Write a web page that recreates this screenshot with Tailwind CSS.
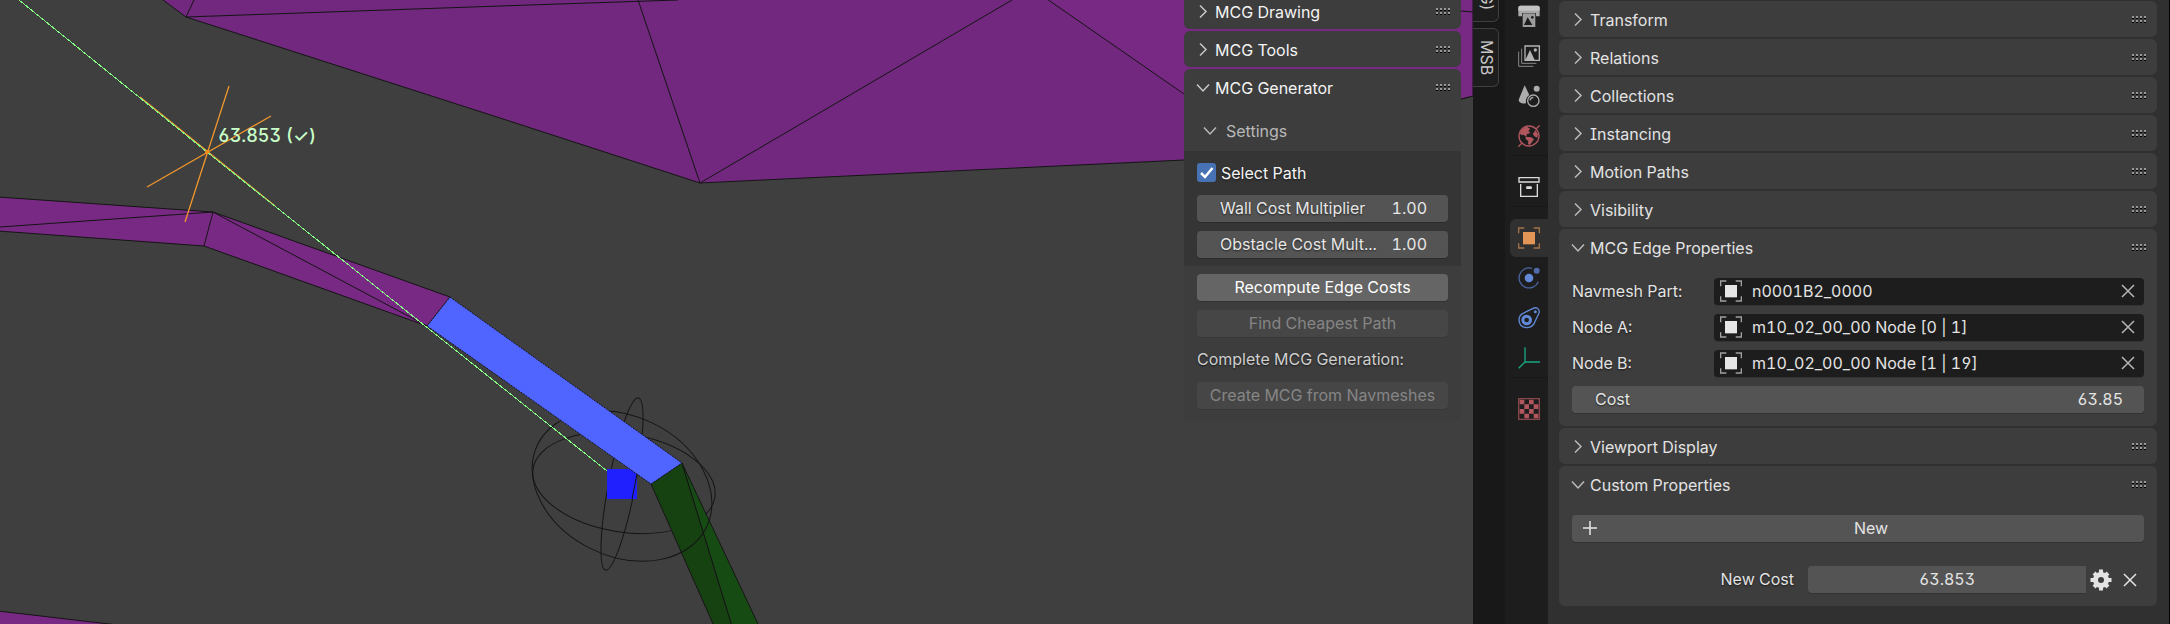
<!DOCTYPE html>
<html lang="en">
<head>
<meta charset="utf-8">
<meta name="viewport" content="width=device-width, initial-scale=1">
<title>MCG Editor</title>
<script src="https://cdn.jsdelivr.net/npm/@tailwindcss/browser@4"></script>
</head>
<body class="bg-[#3f3f3f] font-['Inter',sans-serif] text-base leading-5 text-[#e3e3e3] [font-feature-settings:'cv08','cv09','cv03','cv04','tnum'] [font-optical-sizing:none] [text-shadow:0_1px_2px_rgb(0_0_0/0.6)]">

<svg class="hidden" aria-hidden="true">
  <symbol id="right" viewBox="0 0 14 14"><path d="M4 1.500L10 7.500L4 13.500" fill="none" stroke="currentColor" stroke-width="1.500"/></symbol>
  <symbol id="down" viewBox="0 0 14 14"><path d="M1 4.500L7 11L13 4.500" fill="none" stroke="currentColor" stroke-width="1.500"/></symbol>
  <symbol id="grip" viewBox="0 0 14 7">
    <path d="M0 2h2v1h-2zM4 2h2v1h-2zM8 2h2v1h-2zM12 2h2v1h-2zM0 6h2v1h-2zM4 6h2v1h-2zM8 6h2v1h-2zM12 6h2v1h-2z" fill="#000"/>
    <path d="M0 0h2v2h-2zM4 0h2v2h-2zM8 0h2v2h-2zM12 0h2v2h-2zM0 4h2v2h-2zM4 4h2v2h-2zM8 4h2v2h-2zM12 4h2v2h-2z" fill="#989898"/>
  </symbol>
  <symbol id="cross" viewBox="0 0 14 14"><path d="M1 1L13 13M13 1L1 13" fill="none" stroke="currentColor" stroke-width="1.500"/></symbol>
  <symbol id="object" viewBox="0 0 66 66">
    <path d="M2 19V3H19M47 3H64V19M2 49V63H19M47 63H64V49" fill="none" stroke="currentColor" stroke-width="4" opacity=".65"/>
    <path d="M15 15H51V52H15z" fill="currentColor"/>
  </symbol>
</svg>

<div class="flex min-h-screen overflow-hidden">

  <main class="relative flex min-w-0 flex-1 overflow-hidden">
    <svg class="absolute top-0 left-0" width="1473" height="624" viewBox="0 0 1473 624" role="img" aria-label="Navmesh viewport">
      <g stroke="#151515" stroke-width="1">
        <path d="M163 0L186 17L500 118L700 183L1184 160L1280 156L1461 99L1473 96V-2H163z" fill="#71287e"/>
        <path d="M1047 -1L1184 94L1280 156L1461 99L1473 96V-2z" fill="#782983"/>
        <path d="M194 0L186 17L500 6L678 0M638 0L700 183L1012 0M1461 11L1473 12" fill="none"/>
        <path d="M-2 197L213 212L450 297L427 326L204 246L-2 231z" fill="#782983"/>
        <path d="M0 227L213 212L204 246M213 212L427 326" fill="none"/>
        <path d="M-2 611L118 625H-2z" fill="#782983"/>
        <ellipse cx="624" cy="483" rx="92" ry="49" transform="rotate(9 624 483)" fill="none"/>
        <path d="M651 484L714 626H732L682 463z" fill="#164212"/>
        <path d="M682 463L759 626H732z" fill="#174b14"/>
        <ellipse cx="622" cy="486" rx="94" ry="70" transform="rotate(26 622 486)" fill="none"/>
        <ellipse cx="622" cy="484" rx="87.500" ry="13.400" transform="rotate(-79.200 622 484)" fill="none"/>
        <path d="M607 469H637V499H607z" fill="#2020ff" stroke="none"/>
        <path d="M637 474L632 499" fill="none"/>
        <path d="M450 297L682 463L651 484L427 326z" fill="#5065ff" stroke-dasharray="2 1"/>
      </g>
      <path d="M229 86L185 222M271 116L147 187M140 97L275 206" fill="none" stroke="#f0962e" stroke-width="1.300"/>
      <path d="M19 0L207 152L607 471" fill="none" stroke="#84ff84" stroke-width="1" shape-rendering="crispEdges"/>
      <circle cx="207" cy="152" r="2" fill="#ff8c1a"/>
      <text x="218" y="142" font-size="18" font-weight="500" fill="#c8ffc8" class="[text-shadow:none]">63.853 (✓)</text>
    </svg>

    <aside class="relative -mt-[7px] mr-3 ml-auto flex w-[277px] flex-col gap-0.5 text-[#f4f4f4]">
      <section class="rounded-md bg-[#3d3d3d]">
        <button class="flex h-9 w-full items-center pr-[11px] pl-3 text-left"><svg class="mr-[5px] h-3.5 w-3.5 text-[#c8c8c8]"><use href="#right"/></svg><span class="flex-1 pt-0.5">MCG Drawing</span><svg class="h-[7px] w-3.5"><use href="#grip"/></svg></button>
      </section>
      <section class="rounded-md bg-[#3d3d3d]">
        <button class="flex h-9 w-full items-center pr-[11px] pl-3 text-left"><svg class="mr-[5px] h-3.5 w-3.5 text-[#c8c8c8]"><use href="#right"/></svg><span class="flex-1 pt-0.5">MCG Tools</span><svg class="h-[7px] w-3.5"><use href="#grip"/></svg></button>
      </section>
      <section class="rounded-md bg-[#3d3d3d] pb-3">
        <button class="flex h-9 w-full items-center pr-[11px] pl-3 text-left"><svg class="mr-[5px] h-3.5 w-3.5 text-[#c8c8c8]"><use href="#down"/></svg><span class="flex-1 pt-0.5">MCG Generator</span><svg class="h-[7px] w-3.5"><use href="#grip"/></svg></button>
        <button class="mt-2 flex h-[38px] w-full items-center pb-1 pl-[19px] text-left text-[#b8b8b8]"><svg class="mr-[9px] h-3.5 w-3.5"><use href="#down"/></svg><span class="pt-0.5">Settings</span></button>
        <div class="flex flex-col gap-[9px] bg-[#353535] px-[13px] pt-[9px] pb-2">
          <label class="flex h-[26px] items-center gap-[5px] pb-px">
            <span class="relative h-[19px] w-[19px]">
              <input type="checkbox" checked class="block h-[19px] w-[19px] appearance-none rounded-[3px] bg-[#4772b3]">
              <svg class="pointer-events-none absolute inset-0" width="19" height="19" viewBox="0 0 19 19"><path d="M4 10L8 14L15.500 5" fill="none" stroke="#fff" stroke-width="2.500"/></svg>
            </span>
            <span>Select Path</span>
          </label>
          <label class="flex h-[27px] items-center rounded bg-[#545454] pr-[21px] pb-px pl-[23px] text-[#e6e6e6] shadow-[0_1px_0_#2b2b2b]"><span class="flex-1 whitespace-nowrap">Wall Cost Multiplier</span><input type="text" value="1.00" class="w-10 bg-transparent text-right"></label>
          <label class="flex h-[27px] items-center rounded bg-[#545454] pr-[21px] pb-px pl-[23px] text-[#e6e6e6] shadow-[0_1px_0_#2b2b2b]"><span class="flex-1 whitespace-nowrap">Obstacle Cost Mult...</span><input type="text" value="1.00" class="w-10 bg-transparent text-right"></label>
        </div>
        <div class="flex flex-col gap-[9px] px-[13px] pt-2">
          <button class="h-[27px] rounded bg-[#656565] pb-px text-white shadow-[0_1px_0_#333]">Recompute Edge Costs</button>
          <button disabled class="h-[27px] rounded bg-[#464646] pb-px text-[#858585] shadow-[0_1px_0_#373737]">Find Cheapest Path</button>
          <p class="h-[27px] leading-[27px] text-[#cfcfcf]">Complete MCG Generation:</p>
          <button disabled class="h-[27px] rounded bg-[#464646] pb-px whitespace-nowrap text-[#858585] shadow-[0_1px_0_#373737]">Create MCG from Navmeshes</button>
        </div>
      </section>
    </aside>
  </main>

  <div class="flex w-8 shrink-0 flex-col items-start gap-1.5 bg-[#181818] text-[#c8c8c8]">
    <button class="-mt-12 flex h-[70px] w-[26px] items-end justify-center rounded-r-md border border-l-0 border-[#3f3f3f] bg-[#1d1d1d] pb-2.5 pl-0.5"><span class="[writing-mode:vertical-rl]">(MCG)</span></button>
    <button class="flex h-[59px] w-[26px] items-center justify-center rounded-r-md border border-l-0 border-[#3f3f3f] bg-[#1d1d1d] pl-0.5"><span class="[writing-mode:vertical-rl]">MSB</span></button>
  </div>

  <nav class="flex w-[43px] shrink-0 flex-col gap-3 bg-[#1d1d1d] pl-[5px]" aria-label="Property tabs">
    <div class="-mt-[3px] flex flex-col gap-0.5 border-b border-[#181818]">
      <button aria-label="Output" class="flex h-[38px] w-[38px] items-center justify-center">
        <svg width="22" height="22" viewBox="0 0 66 66"><path d="M7 2H59Q65 2 65 8V34H54V24H12V34H1V8Q1 2 7 2z" fill="#a8a8a8"/><path d="M1 17V8Q1 2 7 2H59Q65 2 65 8V17z" fill="#c2c2c2"/><path d="M14 25H52V66H14z" fill="#9c9c9c"/><path d="M18 60L29 37L43 60z" fill="#1d1d1d"/><circle cx="43" cy="37" r="4" fill="#1d1d1d"/></svg></button>
      <button aria-label="View Layer" class="flex h-[38px] w-[38px] items-center justify-center">
        <svg width="22" height="22" viewBox="0 0 66 66" fill="none"><path d="M2 20V64H46M11 11V55H55" stroke="#888" stroke-width="3"/><path d="M21 3H64V46H21z" stroke="#b4b4b4" stroke-width="4"/><path d="M22 45L36 15L50 45z" fill="#b4b4b4"/><circle cx="52" cy="15" r="5" fill="#b4b4b4"/></svg></button>
      <button aria-label="Scene" class="flex h-[38px] w-[38px] items-center justify-center">
        <svg width="22" height="22" viewBox="0 0 66 66" fill="none"><path d="M20 1L2 44Q2 52 12 55Q20 57 24 54Q22 38 34 30z" fill="#acacac"/><circle cx="56" cy="11" r="9" fill="#acacac"/><circle cx="46" cy="47" r="17" stroke="#acacac" stroke-width="4"/><path d="M36 46Q38 38 46 37" stroke="#acacac" stroke-width="4"/></svg></button>
      <button aria-label="World" class="flex h-[38px] w-[38px] items-center justify-center">
        <svg width="22" height="22" viewBox="0 0 66 66" fill="none"><circle cx="33" cy="33" r="30" stroke="#b2565e" stroke-width="4"/><path d="M54 12L65 1M12 54L1 65" stroke="#b2565e" stroke-width="4"/><path d="M5 25Q12 9 27 5L37 12L31 17L37 24L27 27L24 35L17 29L10 30z" fill="#b2565e"/><path d="M23 35L40 37L48 43L42 51L35 61L30 56L31 48L23 42z" fill="#b2565e"/><path d="M51 14L60 27L58 38L49 34L44 26L49 22z" fill="#b2565e"/></svg></button>
    </div>
    <div class="border-b border-[#181818]">
      <button aria-label="Collection" class="flex h-[38px] w-[38px] items-center justify-center">
        <svg width="22" height="22" viewBox="0 0 66 66" fill="none" stroke="#dcdcdc" stroke-width="4"><path d="M3 5H63V18H3zM8 24V61H58V24"/><rect x="26" y="33" width="14" height="4" rx="2" fill="#dcdcdc"/></svg></button>
    </div>
    <div class="flex flex-col gap-0.5 border-b border-[#181818]">
      <button aria-label="Object" class="flex h-[38px] w-[38px] items-center justify-center rounded-l-md bg-[#303030] text-[#e19658]"><svg width="22" height="22"><use href="#object"/></svg></button>
      <button aria-label="Physics" class="flex h-[38px] w-[38px] items-center justify-center">
        <svg width="22" height="22" viewBox="0 0 66 66" fill="none"><path d="M42 4A30 30 0 1 0 61 44" stroke="#4b64a0" stroke-width="4"/><circle cx="33" cy="33" r="13" fill="#6289d8"/><circle cx="56" cy="11" r="9" fill="#5069a8"/></svg></button>
      <button aria-label="Constraints" class="flex h-[38px] w-[38px] items-center justify-center">
        <svg width="22" height="22" viewBox="0 0 66 66" fill="none" stroke="#6289d8"><path d="M44 5Q50 1 57 3Q66 8 63 18L48 50Q41 62 26 62Q4 61 3 38Q4 24 15 19z" stroke-width="4"/><circle cx="26" cy="39" r="11.500" stroke-width="9"/><circle cx="52" cy="14" r="4.500" fill="#6289d8" stroke="none"/></svg></button>
      <button aria-label="Data" class="flex h-[38px] w-[38px] items-center justify-center">
        <svg width="22" height="22" viewBox="0 0 66 66" fill="none" stroke="#19a782" stroke-width="4"><path d="M21 1V45H66M21 45L2 64"/></svg></button>
    </div>
    <div>
      <button aria-label="Texture" class="flex h-[38px] w-[38px] items-center justify-center">
        <svg width="22" height="22" viewBox="0 0 66 66" fill="#b2565e"><path d="M2 2H64V64H2z" fill="none" stroke="#8a464d" stroke-width="4"/><path d="M5 5h14v14h-14zM33 5h14v14h-14zM19 19h14v14h-14zM47 19h14v14h-14zM5 33h14v14h-14zM33 33h14v14h-14zM19 47h14v14h-14zM47 47h14v14h-14z"/></svg></button>
    </div>
  </nav>

  <aside class="flex w-[622px] shrink-0 flex-col gap-0.5 border-r border-black bg-[#303030] pt-px pr-3 pl-[11px]">
    <section class="rounded-md bg-[#3d3d3d]">
      <button class="flex h-9 w-full items-center pr-[11px] pl-3 text-left"><svg class="mr-[5px] h-3.5 w-3.5 text-[#bbb]"><use href="#right"/></svg><span class="flex-1 pt-0.5">Transform</span><svg class="h-[7px] w-3.5"><use href="#grip"/></svg></button>
    </section>
    <section class="rounded-md bg-[#3d3d3d]">
      <button class="flex h-9 w-full items-center pr-[11px] pl-3 text-left"><svg class="mr-[5px] h-3.5 w-3.5 text-[#bbb]"><use href="#right"/></svg><span class="flex-1 pt-0.5">Relations</span><svg class="h-[7px] w-3.5"><use href="#grip"/></svg></button>
    </section>
    <section class="rounded-md bg-[#3d3d3d]">
      <button class="flex h-9 w-full items-center pr-[11px] pl-3 text-left"><svg class="mr-[5px] h-3.5 w-3.5 text-[#bbb]"><use href="#right"/></svg><span class="flex-1 pt-0.5">Collections</span><svg class="h-[7px] w-3.5"><use href="#grip"/></svg></button>
    </section>
    <section class="rounded-md bg-[#3d3d3d]">
      <button class="flex h-9 w-full items-center pr-[11px] pl-3 text-left"><svg class="mr-[5px] h-3.5 w-3.5 text-[#bbb]"><use href="#right"/></svg><span class="flex-1 pt-0.5">Instancing</span><svg class="h-[7px] w-3.5"><use href="#grip"/></svg></button>
    </section>
    <section class="rounded-md bg-[#3d3d3d]">
      <button class="flex h-9 w-full items-center pr-[11px] pl-3 text-left"><svg class="mr-[5px] h-3.5 w-3.5 text-[#bbb]"><use href="#right"/></svg><span class="flex-1 pt-0.5">Motion Paths</span><svg class="h-[7px] w-3.5"><use href="#grip"/></svg></button>
    </section>
    <section class="rounded-md bg-[#3d3d3d]">
      <button class="flex h-9 w-full items-center pr-[11px] pl-3 text-left"><svg class="mr-[5px] h-3.5 w-3.5 text-[#bbb]"><use href="#right"/></svg><span class="flex-1 pt-0.5">Visibility</span><svg class="h-[7px] w-3.5"><use href="#grip"/></svg></button>
    </section>
    <section class="rounded-md bg-[#3d3d3d]">
      <button class="flex h-9 w-full items-center pr-[11px] pl-3 text-left"><svg class="mr-[5px] h-3.5 w-3.5 text-[#bbb]"><use href="#down"/></svg><span class="flex-1 pt-0.5">MCG Edge Properties</span><svg class="h-[7px] w-3.5"><use href="#grip"/></svg></button>
      <div class="flex flex-col gap-[9px] px-[13px] pt-[13px] pb-[13px]">
        <div class="flex h-[27px] items-center">
          <label for="part" class="w-[142px] pb-0.5">Navmesh Part:</label>
          <div class="flex h-full flex-1 items-center rounded bg-[#1d1d1d] pr-[9px] pb-px pl-1.5 shadow-[0_1px_0_#333]"><svg class="text-[#e6e6e6]" width="22" height="22"><use href="#object"/></svg><input id="part" type="text" value="n0001B2_0000" class="ml-2.5 min-w-0 flex-1 bg-transparent"><button aria-label="Clear Navmesh Part" class="text-[#b5b5b5]"><svg class="h-3.5 w-3.5"><use href="#cross"/></svg></button></div>
        </div>
        <div class="flex h-[27px] items-center">
          <label for="nodea" class="w-[142px] pb-0.5">Node A:</label>
          <div class="flex h-full flex-1 items-center rounded bg-[#1d1d1d] pr-[9px] pb-px pl-1.5 shadow-[0_1px_0_#333]"><svg class="text-[#e6e6e6]" width="22" height="22"><use href="#object"/></svg><input id="nodea" type="text" value="m10_02_00_00 Node [0 | 1]" class="ml-2.5 min-w-0 flex-1 bg-transparent"><button aria-label="Clear Node A" class="text-[#b5b5b5]"><svg class="h-3.5 w-3.5"><use href="#cross"/></svg></button></div>
        </div>
        <div class="flex h-[27px] items-center">
          <label for="nodeb" class="w-[142px] pb-0.5">Node B:</label>
          <div class="flex h-full flex-1 items-center rounded bg-[#1d1d1d] pr-[9px] pb-px pl-1.5 shadow-[0_1px_0_#333]"><svg class="text-[#e6e6e6]" width="22" height="22"><use href="#object"/></svg><input id="nodeb" type="text" value="m10_02_00_00 Node [1 | 19]" class="ml-2.5 min-w-0 flex-1 bg-transparent"><button aria-label="Clear Node B" class="text-[#b5b5b5]"><svg class="h-3.5 w-3.5"><use href="#cross"/></svg></button></div>
        </div>
        <label class="flex h-[27px] items-center rounded bg-[#545454] pr-[21px] pb-px pl-[23px] shadow-[0_1px_0_#333]"><span class="flex-1">Cost</span><input type="text" value="63.85" class="w-24 bg-transparent text-right"></label>
      </div>
    </section>
    <section class="rounded-md bg-[#3d3d3d]">
      <button class="flex h-9 w-full items-center pr-[11px] pl-3 text-left"><svg class="mr-[5px] h-3.5 w-3.5 text-[#bbb]"><use href="#right"/></svg><span class="flex-1 pt-0.5">Viewport Display</span><svg class="h-[7px] w-3.5"><use href="#grip"/></svg></button>
    </section>
    <section class="rounded-md bg-[#3d3d3d]">
      <button class="flex h-9 w-full items-center pr-[11px] pl-3 text-left"><svg class="mr-[5px] h-3.5 w-3.5 text-[#bbb]"><use href="#down"/></svg><span class="flex-1 pt-0.5">Custom Properties</span><svg class="h-[7px] w-3.5"><use href="#grip"/></svg></button>
      <div class="px-[13px] pt-[13px] pb-[13px]">
        <button class="flex h-[27px] w-full items-center rounded bg-[#545454] px-[11px] pb-px shadow-[0_1px_0_#333]"><svg width="14" height="14" viewBox="0 0 14 14"><path d="M7 0V14M0 7H14" stroke="#e6e6e6" stroke-width="1.500"/></svg><span class="flex-1 pl-3">New</span></button>
        <div class="mt-6 flex h-[27px] items-center">
          <label for="newcost" class="w-[222px] pb-0.5 text-right">New Cost</label>
          <input id="newcost" type="text" value="63.853" class="ml-3.5 h-full min-w-0 flex-1 rounded-l bg-[#545454] pb-px text-center shadow-[0_1px_0_#333]">
          <button aria-label="Edit property" class="ml-1 text-[#e3e3e3]"><svg width="22" height="22" viewBox="-11 -11 22 22"><path d="M0 -10.500V10.500M-10.500 0H10.500M-7 -7L7 7M7 -7L-7 7" stroke="currentColor" stroke-width="4"/><circle r="8" fill="currentColor"/><circle r="3" fill="#3d3d3d"/></svg></button>
          <button aria-label="Remove property" class="mr-[7px] ml-[11px] text-[#e3e3e3]"><svg class="h-3.5 w-3.5"><use href="#cross"/></svg></button>
        </div>
      </div>
    </section>
  </aside>
</div>
</body>
</html>
